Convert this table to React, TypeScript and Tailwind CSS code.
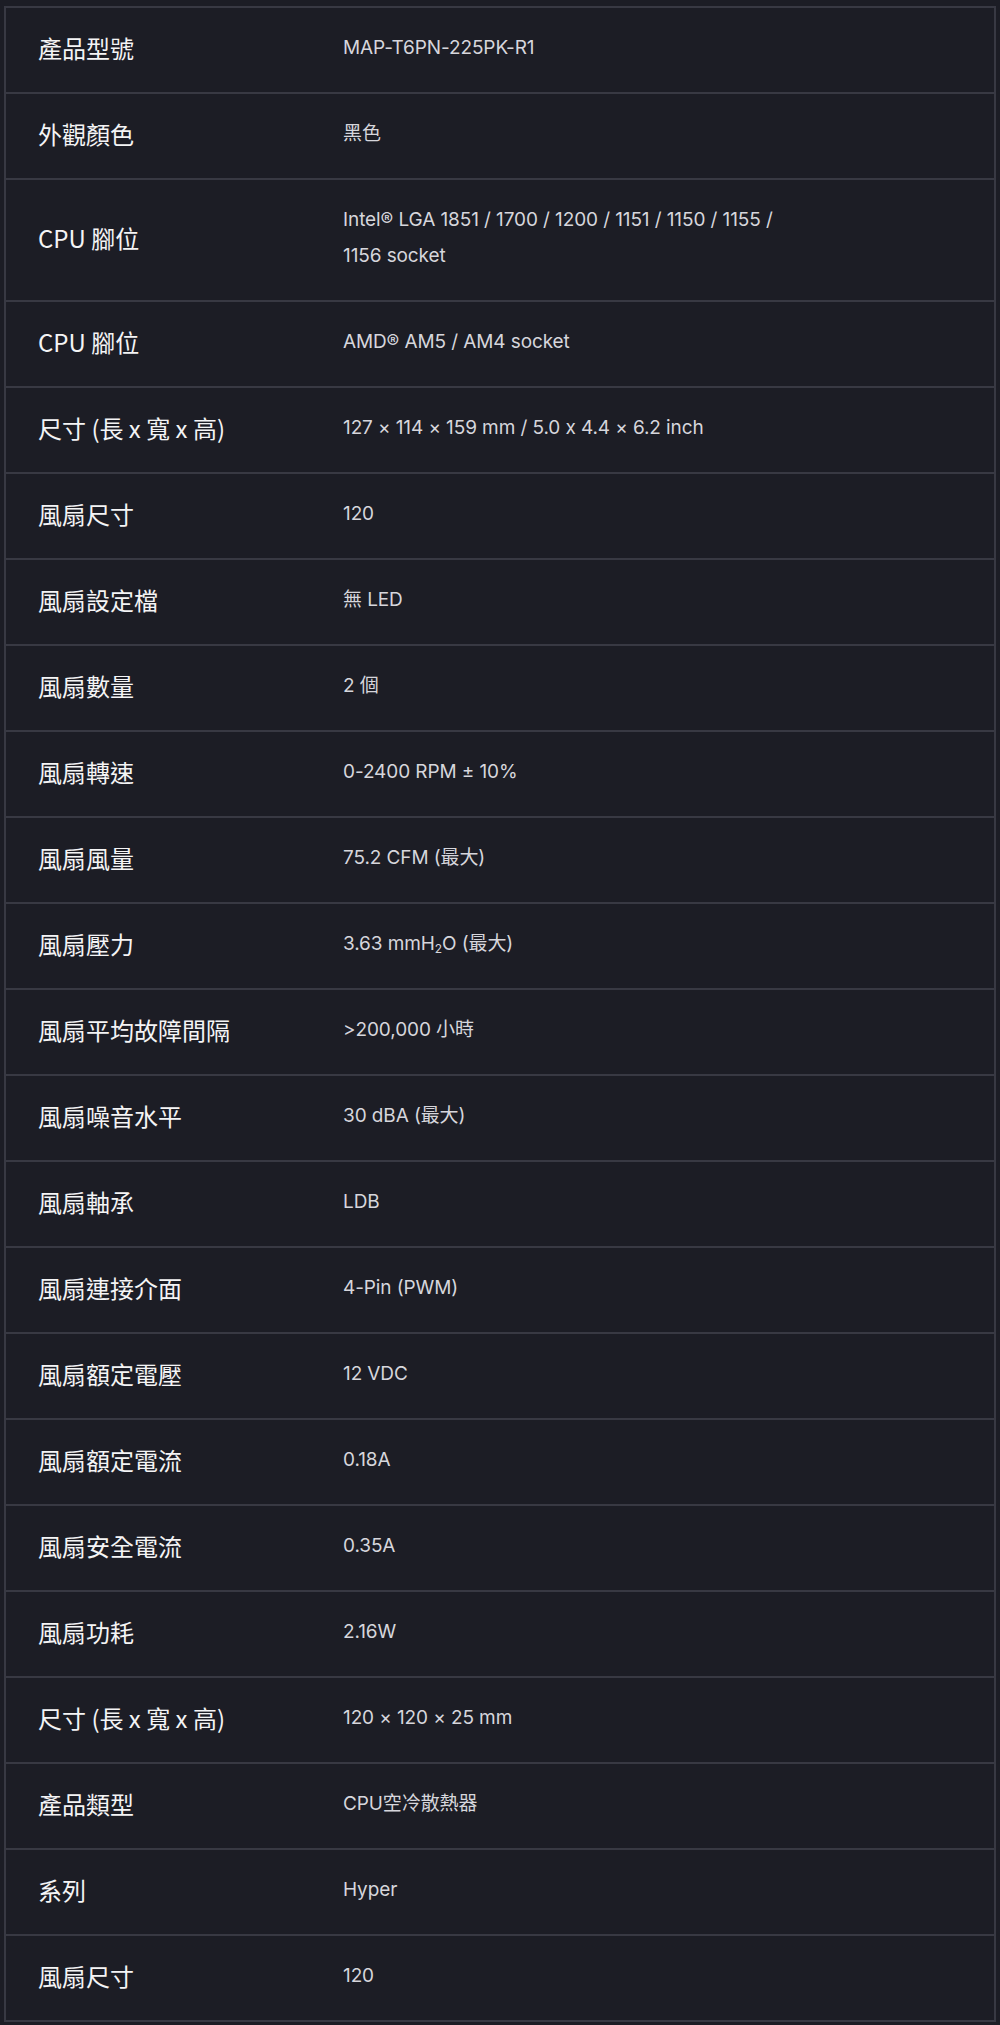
const specs: { label: string; value: React.ReactNode }[] = [
  { label: "產品型號", value: "MAP-T6PN-225PK-R1" },
  { label: "外觀顏色", value: "黑色" },
  { label: "CPU 腳位", value: "Intel® LGA 1851 / 1700 / 1200 / 1151 / 1150 / 1155 / 1156 socket" },
  { label: "CPU 腳位", value: "AMD® AM5 / AM4 socket" },
  { label: "尺寸 (長 x 寬 x 高)", value: "127 × 114 × 159 mm / 5.0 x 4.4 × 6.2 inch" },
  { label: "風扇尺寸", value: "120" },
  { label: "風扇設定檔", value: "無 LED" },
  { label: "風扇數量", value: "2 個" },
  { label: "風扇轉速", value: "0-2400 RPM ± 10%" },
  { label: "風扇風量", value: "75.2 CFM (最大)" },
  {
    label: "風扇壓力",
    value: (
      <>
        3.63 mmH<sub className="text-[12px]">2</sub>O (最大)
      </>
    ),
  },
  { label: "風扇平均故障間隔", value: ">200,000 小時" },
  { label: "風扇噪音水平", value: "30 dBA (最大)" },
  { label: "風扇軸承", value: "LDB" },
  { label: "風扇連接介面", value: "4-Pin (PWM)" },
  { label: "風扇額定電壓", value: "12 VDC" },
  { label: "風扇額定電流", value: "0.18A" },
  { label: "風扇安全電流", value: "0.35A" },
  { label: "風扇功耗", value: "2.16W" },
  { label: "尺寸 (長 x 寬 x 高)", value: "120 × 120 × 25 mm" },
  { label: "產品類型", value: "CPU空冷散熱器" },
  { label: "系列", value: "Hyper" },
  { label: "風扇尺寸", value: "120" },
];

export default function App() {
  return (
    <div className="min-h-[2025px] bg-[#1c1d25] pt-[6px] px-[4px] pb-[5px]">
      <div className="border-2 border-[#383943] bg-[#1c1d25]">
        {specs.map((row, i) => (
          <div
            key={i}
            className={`flex items-center pt-[22px] pb-[26px] ${
              i < specs.length - 1 ? "border-b-2 border-[#383943]" : ""
            }`}
          >
            <div className="w-[337px] shrink-0 pl-[32px] text-[24px] leading-[36px] font-normal text-[#f4f4f5] [font-family:'Noto_Sans_CJK_TC',Inter,sans-serif]">
              {row.label}
            </div>
            <div className="max-w-[450px] text-[19px] leading-[36px] tracking-[-0.1px] text-[#d6d6dc] [font-family:Inter,'Noto_Sans_CJK_TC',sans-serif]">
              {row.value}
            </div>
          </div>
        ))}
      </div>
    </div>
  );
}
